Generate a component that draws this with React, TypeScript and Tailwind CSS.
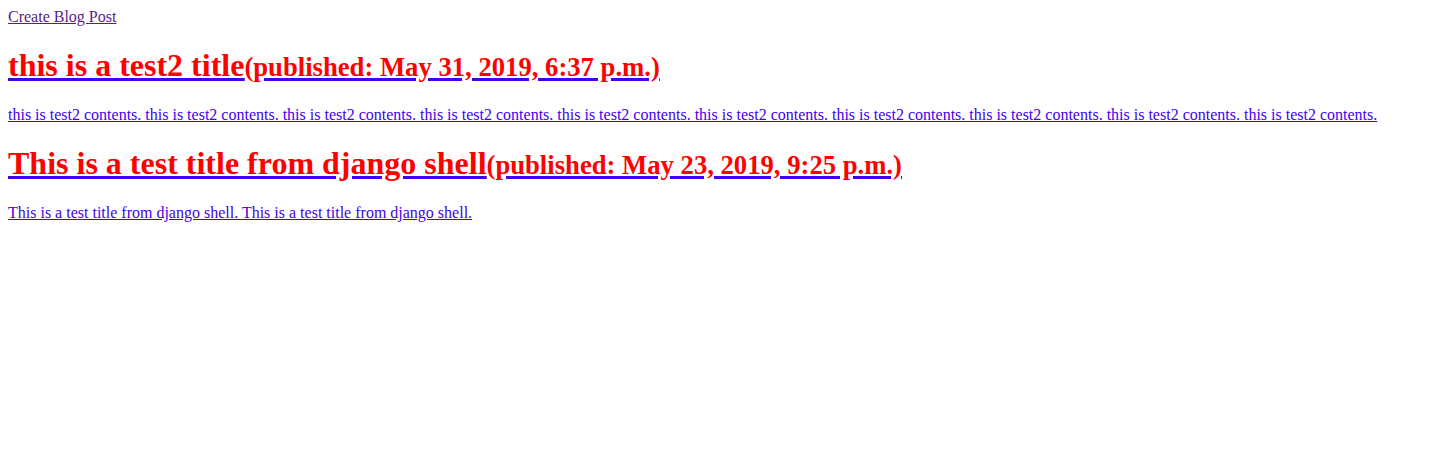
import React from "react";

const posts = [
  {
    title: "this is a test2 title",
    published: "(published: May 31, 2019, 6:37 p.m.)",
    body: Array(10).fill("this is test2 contents.").join(" "),
  },
  {
    title: "This is a test title from django shell",
    published: "(published: May 23, 2019, 9:25 p.m.)",
    body: "This is a test title from django shell. This is a test title from django shell.",
  },
];

export default function App() {
  return (
    <div className="min-h-screen bg-white p-2 font-['Liberation_Serif',serif] text-base leading-[normal] text-black">
      <a href="#" className="text-[#5c1a8e] underline">
        Create Blog Post
      </a>
      {posts.map((p) => (
        <a key={p.title} href="#" className="block text-[#4200f0] underline">
          <h1 className="mt-[21.44px] mb-[21.44px] text-[32px] leading-[normal] font-bold text-[#ff0000]">
            {p.title}
            <small className="text-[26.67px] font-bold">{p.published}</small>
          </h1>
          <p className="my-4 text-base leading-[normal]">{p.body}</p>
        </a>
      ))}
    </div>
  );
}
